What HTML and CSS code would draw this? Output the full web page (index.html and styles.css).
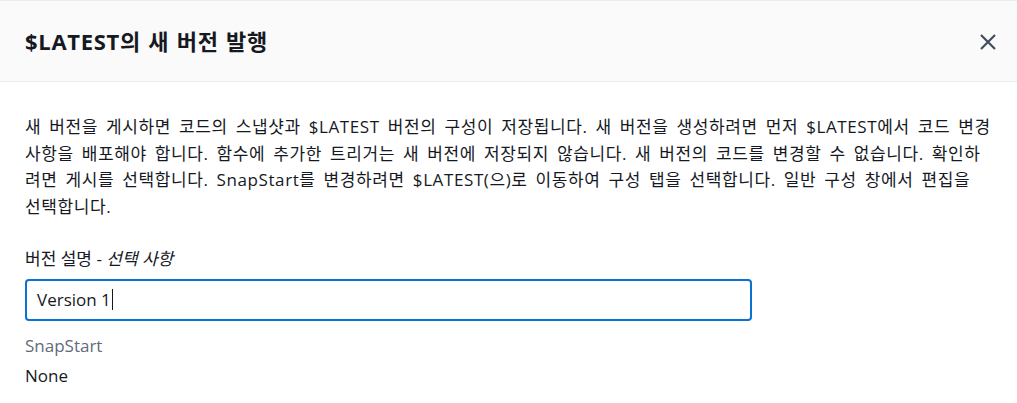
FILE: index.html
```html
<!DOCTYPE html>
<html lang="ko">
<head>
<meta charset="utf-8">
<link rel="stylesheet" href="styles.css">
</head>
<body>
<div class="modal">
  <div class="header">
    <h2 class="title">$LATEST의 새 버전 발행</h2>
    <button class="close" aria-label="닫기">
      <svg width="18" height="18" viewBox="0 0 18 18"><path d="M2 2l14 14M16 2L2 16" stroke="#414d5c" stroke-width="2.2" fill="none"/></svg>
    </button>
  </div>
  <div class="content">
    <p class="desc">새 버전을 게시하면 코드의 스냅샷과 $LATEST 버전의 구성이 저장됩니다. 새 버전을 생성하려면 먼저 $LATEST에서 코드 변경 사항을 배포해야 합니다. 함수에 추가한 트리거는 새 버전에 저장되지 않습니다. 새 버전의 코드를 변경할 수 없습니다. 확인하려면 게시를 선택합니다. SnapStart를 변경하려면 $LATEST(으)로 이동하여 구성 탭을 선택합니다. 일반 구성 창에서 편집을 선택합니다.</p>
    <div class="field">
      <label class="label">버전 설명 - <i>선택 사항</i></label>
      <div class="input">Version 1<span class="caret"></span></div>
    </div>
    <div class="kv">
      <div class="kv-key">SnapStart</div>
      <div class="kv-val">None</div>
    </div>
  </div>
</div>
</body>
</html>
```

FILE: styles.css
```css
* { box-sizing: border-box; }
html, body { margin: 0; padding: 0; background: #fff; }
body {
  font-family: "Open Sans", "Noto Sans CJK KR", sans-serif;
  color: #16191f;
  width: 1017px;
  height: 403px;
  overflow: hidden;
}
.modal { width: 1017px; }
.header {
  height: 82px;
  background: #fafafa;
  border-top: 1px solid #e9ebed;
  border-bottom: 1px solid #e9ebed;
  display: flex;
  align-items: center;
  justify-content: space-between;
  padding: 0 20px 0 25px;
}
.title {
  margin: 0 0 3px 0;
  font-size: 22px;
  font-weight: 700;
  letter-spacing: 0.7px;
  word-spacing: 1px;
  color: #16191f;
}
.close {
  background: none;
  border: 0;
  padding: 0;
  width: 18px;
  height: 18px;
  display: flex;
  margin-top: 1px;
}
.content { padding: 32px 23px 0 25px; }
.desc {
  margin: 0;
  font-size: 17px;
  line-height: 26.7px;
  letter-spacing: 0.6px;
  word-spacing: 3px;
  color: #16191f;
}
.field { margin-top: 25px; }
.label {
  display: block;
  font-size: 17px;
  line-height: 26px;
  color: #16191f;
}
.label i { font-style: italic; }
.input {
  margin-top: 7px;
  width: 727px;
  height: 42px;
  border: 2px solid #0972d3;
  border-radius: 4px;
  padding: 0 10px;
  display: flex;
  align-items: center;
  font-size: 17px;
  color: #16191f;
}
.caret {
  display: inline-block;
  width: 1px;
  height: 21px;
  background: #16191f;
  margin-left: 1px;
}
.kv { margin-top: 10px; }
.kv-key { font-size: 17px; line-height: 30px; color: #5f6b7a; }
.kv-val { font-size: 17px; line-height: 30px; color: #16191f; }
```
